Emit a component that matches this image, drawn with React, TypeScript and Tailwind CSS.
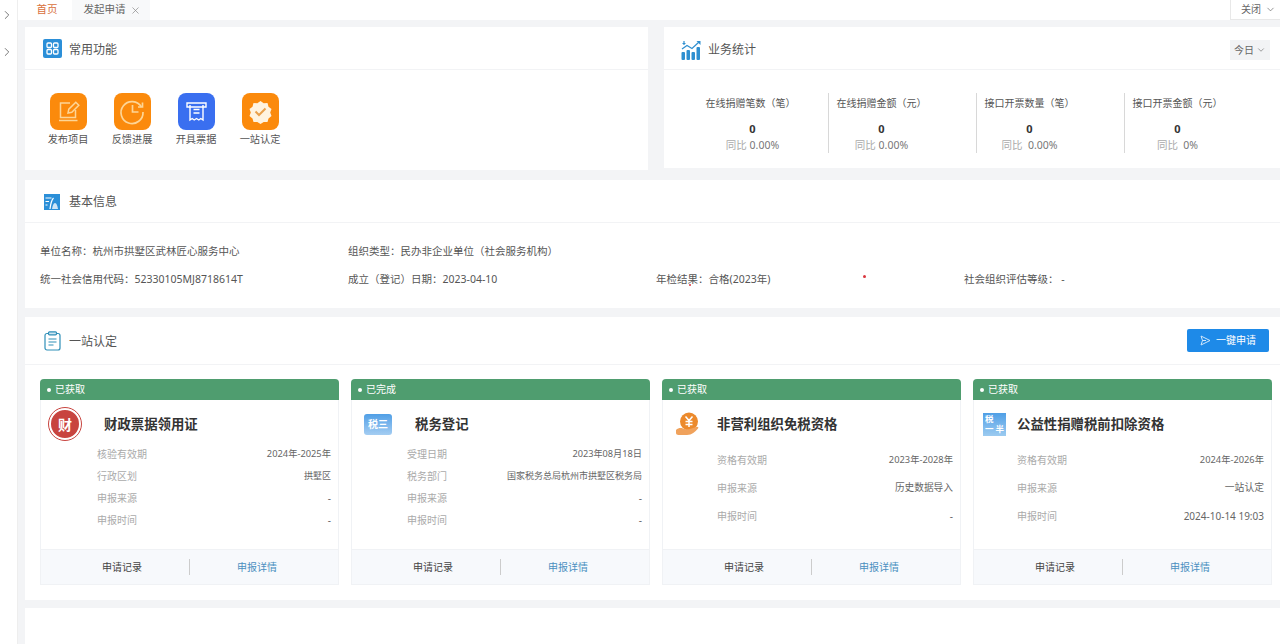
import { ChevronDown, ChevronRight, X } from "lucide-react";
import type { ReactNode } from "react";

interface CertRow {
  label: string;
  value: string;
  size: string;
}

interface Cert {
  status: string;
  title: string;
  iconBox: string;
  icon: ReactNode;
  rowBox: string;
  rowHeight: string;
  rows: CertRow[];
}

const GridIcon = () => (
  <svg width="19" height="19" viewBox="0 0 19 19">
    <rect width="19" height="19" rx="2" fill="#2b8fd8" />
    <g fill="none" stroke="#fff" strokeWidth="1.3">
      <rect x="4" y="4" width="4.5" height="4.5" rx="1" />
      <rect x="10.5" y="4" width="4.5" height="4.5" rx="1" />
      <rect x="4" y="10.5" width="4.5" height="4.5" rx="1" />
      <rect x="10.5" y="10.5" width="4.5" height="4.5" rx="1" />
    </g>
  </svg>
);

const ChartIcon = () => (
  <svg width="20" height="20" viewBox="0 0 20 20">
    <g fill="#2f8fd0">
      <rect x="0.500" y="12" width="3.500" height="8" rx="1" />
      <rect x="5.500" y="10" width="3.500" height="10" rx="1" />
      <rect x="10.500" y="12" width="3.500" height="8" rx="1" />
      <rect x="15.500" y="7" width="3.500" height="13" rx="1" />
    </g>
    <path d="M1 9l5-3.500 5 3 7-6.500" fill="none" stroke="#2f8fd0" strokeWidth="1.200" />
    <path d="M15.500 1H19.500V5z" fill="#2f8fd0" />
    <path d="M3 1v4M1.500 3.500h3" stroke="#2f8fd0" strokeWidth="1.200" />
  </svg>
);

const PersonIcon = () => (
  <svg width="16" height="16" viewBox="0 0 16 16">
    <rect width="16" height="16" fill="#2b8fd8" />
    <path d="M1.500 4h6M1.500 7.500h3.500M1.500 11h2" stroke="#fff" strokeWidth="1" />
    <path d="M6 15c.5-4 1.500-9 3.500-11" fill="none" stroke="#fff" strokeWidth="1.200" />
    <path d="M8 15c.5-3 1.500-6 3-6s2.500 3 3 6z" fill="#cfe6f7" />
  </svg>
);

const ClipboardIcon = () => (
  <svg width="17" height="20" viewBox="0 0 17 20" fill="none" stroke="#2f8fb8" strokeWidth="1.200">
    <rect x="1" y="2.500" width="15" height="16.500" rx="2" />
    <rect x="4.500" y="0.800" width="8" height="3" rx="1" fill="#cfe6f2" />
    <path d="M4.500 8h8M4.500 11h8M4.500 14h5" />
  </svg>
);

const EditIcon = () => (
  <svg width="37" height="37" viewBox="0 0 37 37" fill="none" stroke="#fdd596" strokeWidth="1.500">
    <path d="M20 10h-9.500v14.500h15V17" />
    <path d="M18 20l.8-3.800 7-7 3 3-7 7z" />
    <path d="M9 27.500h18.500" />
  </svg>
);

const ClockIcon = () => (
  <svg width="37" height="37" viewBox="0 0 37 37" fill="none" stroke="#fdd596" strokeWidth="1.700">
    <path d="M27.500 14A11 11 0 1 0 29 19" />
    <path d="M18.500 12v7h6" />
    <path d="M28.500 9.500V14h-4.500" />
  </svg>
);

const ReceiptIcon = () => (
  <svg width="37" height="37" viewBox="0 0 37 37" fill="none" stroke="#fff" strokeWidth="1.400">
    <path d="M9 14v-4h19v4z" />
    <path d="M12 12v15l2.200-1.500 2 1.500 2.300-1.500 2.300 1.500 2-1.500 2.200 1.500V12" />
    <path d="M15.500 16.500h6M15.500 20h6" />
  </svg>
);

const BadgeIcon = () => (
  <svg width="37" height="37" viewBox="0 0 37 37">
    <path
      d="M18.500 8l3.200 2.200 3.800-.2 1 3.700 3 2.400-1.300 3.500 1.300 3.500-3 2.300-1 3.700-3.800-.2-3.200 2.200-3.200-2.200-3.800.2-1-3.700-3-2.300 1.300-3.500-1.300-3.500 3-2.400 1-3.700 3.800.2z"
      fill="#fff3df"
    />
    <path d="M13.500 18.500l3.500 3.500 6.500-6.500" fill="none" stroke="#e9a04c" strokeWidth="2" />
  </svg>
);

const HandCoinIcon = () => (
  <svg width="25" height="25" viewBox="0 0 25 25">
    <circle cx="13" cy="9.500" r="9" fill="#ec8a2c" />
    <path d="M9.500 4.500l3.500 4 3.500-4M13 8.500V15M9.500 9.500h7M9.500 12.500h7" fill="none" stroke="#fff" strokeWidth="1.500" />
    <path d="M0 18c2-2 5-2.500 7-1.500 3 1 5 1 7 .5l6-2c2-.5 3 .5 2 1.500-3 3.500-6 6.500-11 6.500H2.500C1 23 0 22 0 21z" fill="#f0a25c" />
  </svg>
);

const functions = [
  { label: "发布项目", bg: "bg-[#fb8a0c]", icon: <EditIcon /> },
  { label: "反馈进展", bg: "bg-[#fb8a0c]", icon: <ClockIcon /> },
  { label: "开具票据", bg: "bg-[#3a6ff0]", icon: <ReceiptIcon /> },
  { label: "一站认定", bg: "bg-[#fb8a0c]", icon: <BadgeIcon /> },
];

const stats = [
  { label: "在线捐赠笔数（笔）", rate: "0.00%", box: "w-[130px]", shift: "pl-[4px]" },
  { label: "在线捐赠金额（元）", rate: "0.00%", box: "w-[148px] border-l border-[#d8d8d8]", shift: "" },
  { label: "接口开票数量（笔）", rate: " 0.00%", box: "w-[148px] border-l border-[#d8d8d8]", shift: "" },
  { label: "接口开票金额（元）", rate: " 0%", box: "w-[148px] border-l border-[#d8d8d8]", shift: "" },
];

const certs: Cert[] = [
  {
    status: "已获取",
    title: "财政票据领用证",
    iconBox: "w-[63px] pl-[7px]",
    icon: (
      <div className="w-[32px] h-[32px] ml-px rounded-full bg-[#c8443f] border-2 border-white outline outline-1 outline-[#c8443f] flex items-center justify-center text-white text-[14px] font-bold">
        财
      </div>
    ),
    rowBox: "pl-[56px]",
    rowHeight: "h-[22px]",
    rows: [
      { label: "核验有效期", value: "2024年-2025年", size: "text-[9.3px]" },
      { label: "行政区划", value: "拱墅区", size: "text-[9px]" },
      { label: "申报来源", value: "-", size: "text-[10px]" },
      { label: "申报时间", value: "-", size: "text-[10px]" },
    ],
  },
  {
    status: "已完成",
    title: "税务登记",
    iconBox: "w-[63px] pl-[12px]",
    icon: (
      <div className="w-[28px] h-[21px] rounded-[3px] bg-gradient-to-b from-[#4f9fe6] to-[#a4cdf2] flex items-center justify-center text-white text-[10px] font-bold">
        税三
      </div>
    ),
    rowBox: "pl-[55px]",
    rowHeight: "h-[22px]",
    rows: [
      { label: "受理日期", value: "2023年08月18日", size: "text-[9.2px]" },
      { label: "税务部门", value: "国家税务总局杭州市拱墅区税务局", size: "text-[9px]" },
      { label: "申报来源", value: "-", size: "text-[10px]" },
      { label: "申报时间", value: "-", size: "text-[10px]" },
    ],
  },
  {
    status: "已获取",
    title: "非营利组织免税资格",
    iconBox: "w-[54px] pl-[13px]",
    icon: <HandCoinIcon />,
    rowBox: "pl-[54px] mt-[5px]",
    rowHeight: "h-[28px]",
    rows: [
      { label: "资格有效期", value: "2023年-2028年", size: "text-[9.3px]" },
      { label: "申报来源", value: "历史数据导入", size: "text-[9.7px]" },
      { label: "申报时间", value: "-", size: "text-[10px]" },
    ],
  },
  {
    status: "已获取",
    title: "公益性捐赠税前扣除资格",
    iconBox: "w-[43px] pl-[9px]",
    icon: (
      <div className="w-[23px] h-[23px] bg-gradient-to-b from-[#4f9fe6] to-[#9ccbf0] flex flex-col justify-center px-[2px] text-white text-[8.500px] leading-[10px] font-bold">
        <span>税</span>
        <span className="flex justify-between">
          <span>一</span>
          <span>半</span>
        </span>
      </div>
    ),
    rowBox: "pl-[43px] mt-[5px]",
    rowHeight: "h-[28px]",
    rows: [
      { label: "资格有效期", value: "2024年-2026年", size: "text-[9.3px]" },
      { label: "申报来源", value: "一站认定", size: "text-[9.800px]" },
      { label: "申报时间", value: "2024-10-14 19:03", size: "text-[10px]" },
    ],
  },
];

function SectionHeader({
  icon,
  title,
  titleClass,
  iconClass,
  right,
}: {
  icon: ReactNode;
  title: string;
  titleClass: string;
  iconClass: string;
  right?: ReactNode;
}) {
  return (
    <div className="h-[43px] flex items-center border-b border-[#f2f3f5]">
      <div className={`w-[44px] flex justify-end ${iconClass}`}>{icon}</div>
      <span className={`text-[12px] text-[#555] ${titleClass}`}>{title}</span>
      {right}
    </div>
  );
}

function CertCard({ cert }: { cert: Cert }) {
  return (
    <div className="w-[299px] h-[206px] flex flex-col rounded-t-[4px] border-x border-b border-[#f0f2f5]">
      <div className="h-[21px] shrink-0 -mx-px flex items-center gap-[4px] pl-[7px] rounded-t-[4px] bg-[#4f9d6f] text-white text-[10px]">
        <span className="w-[4px] h-[4px] rounded-full bg-white" />
        {cert.status}
      </div>
      <div className="flex-1">
        <div className="h-[34px] mt-[7px] flex items-center">
          <div className={`${cert.iconBox} shrink-0`}>{cert.icon}</div>
          <span className="text-[13.4px] font-bold text-[#333]">{cert.title}</span>
        </div>
        <div className={`${cert.rowBox} pr-[7px] mt-[2px]`}>
          {cert.rows.map((row) => (
            <div key={row.label} className={`${cert.rowHeight} flex items-center justify-between text-[10px]`}>
              <span className="text-[#aaa]">{row.label}</span>
              <span className={`text-[#666] ${row.size}`}>{row.value}</span>
            </div>
          ))}
        </div>
      </div>
      <div className="h-[35px] shrink-0 flex items-center bg-[#f7f9fc] border-t border-[#f0f2f5] text-[10px]">
        <span className="w-[148px] pl-[14px] text-center text-[#444]">申请记录</span>
        <span className="w-px h-[16px] bg-[#ccc]" />
        <span className="flex-1 pr-[14px] text-center text-[#4a8fc0]">申报详情</span>
      </div>
    </div>
  );
}

export default function App() {
  return (
    <div className="w-[1280px] h-[644px] overflow-hidden flex bg-white font-['Noto_Sans','Noto_Sans_CJK_SC',sans-serif]">
      {/* Sidebar */}
      <div className="w-[18px] shrink-0 flex flex-col items-start pt-[8px] gap-[23px] border-r border-[#eee] text-[#666]">
        <ChevronRight className="w-[14px] h-[14px]" strokeWidth={1.5} />
        <ChevronRight className="w-[14px] h-[14px]" strokeWidth={1.5} />
      </div>

      <div className="flex-1 flex flex-col bg-[#f3f4f6]">
        {/* Tabs */}
        <div className="h-[20px] shrink-0 flex items-stretch bg-white pl-[7px] text-[10.5px]">
          <div className="w-[44px] flex items-center justify-center text-[#d9713c]">首页</div>
          <div className="w-[78px] ml-[3px] pl-[2px] flex items-center justify-center gap-[4px] bg-[#f8f9fa] text-[#666]">
            发起申请
            <X className="w-[11px] h-[11px] text-[#888]" strokeWidth={1.5} />
          </div>
          <div className="ml-auto w-[50px] pl-[6px] flex items-center justify-center gap-[4px] border-l border-b border-[#e8e8e8] text-[#666] text-[10px]">
            关闭
            <ChevronDown className="w-[11px] h-[11px]" strokeWidth={1.5} />
          </div>
        </div>

        <div className="flex-1 pl-[7px] pt-[7px] flex flex-col">
          {/* Functions and stats */}
          <div className="flex items-start gap-[16px]">
            <div className="w-[623px] h-[143px] bg-white">
              <SectionHeader icon={<GridIcon />} title="常用功能" titleClass="mt-[4px]" iconClass="pr-[7px] mt-[1px]" />
              <div className="flex pl-[11px] pt-[23px]">
                {functions.map((f) => (
                  <div key={f.label} className="w-[64px] flex flex-col items-center">
                    <div className={`w-[37px] h-[37px] rounded-[8px] ${f.bg}`}>{f.icon}</div>
                    <span className="mt-[2px] text-[10.2px] text-[#555]">{f.label}</span>
                  </div>
                ))}
              </div>
            </div>

            <div className="flex-1 h-[141px] bg-white">
              <SectionHeader
                icon={<ChartIcon />}
                title="业务统计"
                titleClass="mt-[4px]"
                iconClass="pr-[7px] mt-[3px]"
                right={
                  <div className="ml-auto mr-[10px] mt-[4px] w-[40px] h-[20px] flex items-center justify-center gap-[2px] bg-[#f2f3f5] text-[10px] text-[#666]">
                    今日
                    <ChevronDown className="w-[10px] h-[10px]" strokeWidth={1.5} />
                  </div>
                }
              />
              <div className="flex pl-[34px] pt-[23px]">
                {stats.map((s) => (
                  <div key={s.label} className={`${s.box} h-[60px] pl-[8px]`}>
                    <div className="w-[88px] pl-px flex flex-col items-center">
                      <span className="mt-[3px] h-[14px] leading-[14px] text-[10px] text-[#555] whitespace-nowrap">{s.label}</span>
                      <span className={`mt-[12px] h-[14px] leading-[14px] text-[11px] font-bold text-[#333] ${s.shift}`}>0</span>
                      <span className={`mt-[2px] h-[14px] leading-[14px] text-[10.5px] text-[#777] whitespace-pre ${s.shift}`}>
                        <span className="text-[#aaa]">同比 </span>
                        {s.rate}
                      </span>
                    </div>
                  </div>
                ))}
              </div>
            </div>
          </div>

          {/* Basic info */}
          <div className="h-[128px] mt-[10px] bg-white">
            <SectionHeader icon={<PersonIcon />} title="基本信息" titleClass="mt-[2px]" iconClass="pr-[9px] mt-[1px]" />
            <div className="grid grid-cols-[308px_308px_308px_308px] grid-rows-[28px_28px] pl-[15px] pt-[15px] items-center text-[10.5px] text-[#555]">
              <span>单位名称：杭州市拱墅区武林匠心服务中心</span>
              <span className="col-span-3">组织类型：民办非企业单位（社会服务机构）</span>
              <span>统一社会信用代码：52330105MJ8718614T</span>
              <span>成立（登记）日期：2023-04-10</span>
              <span className="relative">
                年检结果：合格(2023年)
                <span className="absolute left-[33px] top-[12px] w-[2px] h-[2px] rounded-full bg-[#d9363e]" />
                <span className="absolute left-[207px] top-[3px] w-[3px] h-[3px] rounded-full bg-[#d9363e]" />
              </span>
              <span>社会组织评估等级： -</span>
            </div>
          </div>

          {/* One-stop certification */}
          <div className="h-[283px] mt-[9px] bg-white">
            <div className="h-[48px] flex items-center border-b border-[#f2f3f5]">
              <div className="w-[44px] flex justify-end pr-[8px]">
                <ClipboardIcon />
              </div>
              <span className="mt-[2px] text-[12px] text-[#555]">一站认定</span>
              <button className="ml-auto mr-[11px] w-[82px] h-[23px] flex items-center justify-center gap-[5px] rounded-[2px] bg-[#1e8ae8] text-white text-[10px]">
                <svg width="11" height="11" viewBox="0 0 11 11" fill="none" stroke="#cfe6fb" strokeWidth="1">
                  <path d="M1 1l9 4.500-9 4.500 1.500-4.500zM2.500 5.500H6" />
                </svg>
                一键申请
              </button>
            </div>
            <div className="flex gap-[12px] pl-[15px] pt-[14px]">
              {certs.map((c) => (
                <CertCard key={c.title} cert={c} />
              ))}
            </div>
          </div>

          <div className="flex-1 mt-[8px] bg-white" />
        </div>
      </div>
    </div>
  );
}
